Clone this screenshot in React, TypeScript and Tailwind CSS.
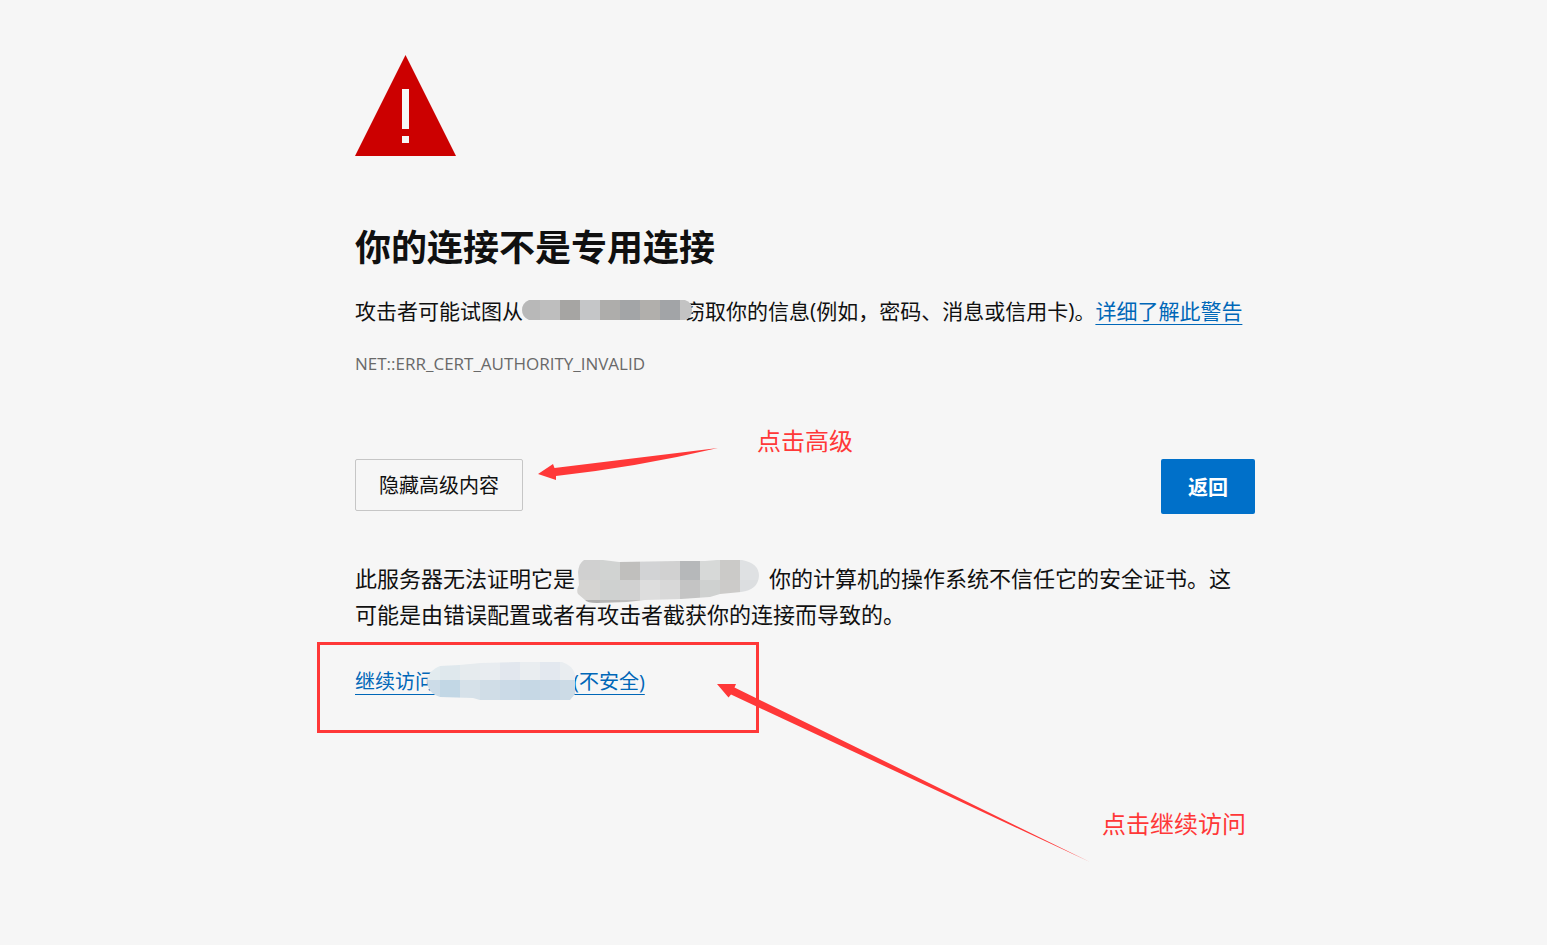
type MosaicProps = {
  id: string;
  width: number;
  height: number;
  shape: string;
  columns: number[];
  rows: { y: number; height: number; colors: string[] }[];
  className: string;
};

const Mosaic = ({ id, width, height, shape, columns, rows, className }: MosaicProps) => {
  return (
    <svg
      aria-hidden="true"
      width={width}
      height={height}
      viewBox={`0 0 ${width} ${height}`}
      shapeRendering="crispEdges"
      className={`relative inline-block align-baseline ${className}`}
    >
      <clipPath id={id}>
        <path d={shape} />
      </clipPath>
      <g clipPath={`url(#${id})`}>
        {rows.map((row) =>
          row.colors.map((color, i) => (
            <rect
              key={`${row.y}-${i}`}
              x={columns[i]}
              y={row.y}
              width={(columns[i + 1] ?? width) - columns[i]}
              height={row.height}
              fill={color}
            />
          ))
        )}
      </g>
    </svg>
  );
};

const WarningIcon = () => {
  return (
    <svg aria-hidden="true" width="102" height="102" viewBox="0 0 102 102" className="block">
      <path d="M50.5 0L101 101H0z" fill="#cc0000" />
      <path d="M47 34h7v40h-7zM47 81h7v7h-7z" fill="#f6f6f6" />
    </svg>
  );
};

// Hand-drawn notes that lie over the page
const Annotations = () => {
  return (
    <div className="absolute inset-0 text-2xl text-[#ff3838] pointer-events-none">
      <svg aria-hidden="true" width="900" height="880" viewBox="0 0 900 880" fill="#ff3838" className="overflow-visible">
        <rect x="-36.5" y="643.5" width="439" height="88" fill="none" stroke="#ff3838" strokeWidth="3" />
        <path d="M183 474L198 464L199.500 468L363 448Q282 467 201 476L201 480z" />
        <path d="M362 684L381 684L379.500 687.500L735 862L376 694.500L373.500 697.500z" />
      </svg>
      <p className="absolute left-[402px] top-[425px] leading-8 whitespace-nowrap">点击高级</p>
      <p className="absolute left-[747px] top-[808px] leading-8 whitespace-nowrap">点击继续访问</p>
    </div>
  );
};

const App = () => {
  return (
    <div
      lang="zh-CN"
      className="min-h-screen bg-[#f6f6f6] pl-[63px] text-[#101010] font-['Open_Sans','Noto_Sans_CJK_SC',sans-serif]"
    >
      <main className="relative flex flex-col max-w-[900px] min-h-screen mx-auto pt-[55px]">
        <WarningIcon />
        <h1 className="mt-[67px] text-4xl leading-12 font-bold">你的连接不是专用连接</h1>
        <div className="flex flex-col mt-[23px] gap-[25px]">
          <p className="text-[21px] leading-8">
            攻击者可能试图从
            <Mosaic
              id="host-summary"
              width={170}
              height={20}
              shape="M7 0H163Q170 2 170 10T163 20H7Q0 17 0 10T7 0z"
              columns={[0, 18, 38, 58, 78, 98, 118, 138, 158]}
              rows={[
                {
                  y: 0,
                  height: 20,
                  colors: ["#b8b8b8", "#bebebe", "#a6a5a3", "#c5c6c8", "#aeadab", "#a3a5a7", "#b1afac", "#a2a4a7", "#c3c3c3"],
                },
              ]}
              className="-mb-px -ml-px -mr-2"
            />
            窃取你的信息(例如，密码、消息或信用卡)。
            <a href="#" className="text-[#0067b8] underline decoration-1 underline-offset-5">
              详细了解此警告
            </a>
          </p>
          <p className="text-[17px] leading-6 text-[#696969]">NET::ERR_CERT_AUTHORITY_INVALID</p>
        </div>

        <div className="flex items-start justify-between mt-[83px] text-xl">
          <button type="button" className="h-[52px] px-[23px] pt-0.5 border border-[#c6c6c6] rounded-xs">
            隐藏高级内容
          </button>
          <button type="button" className="h-[55px] px-[27px] pt-0.5 font-bold text-white bg-[#0070c9] rounded-xs">
            返回
          </button>
        </div>

        <div className="flex flex-col items-start mt-[46px] pr-3 gap-9">
          <p className="text-[22px] leading-9">
            此服务器无法证明它是
            <Mosaic
              id="host-details"
              width={182}
              height={43}
              shape="M7 0H26L42 2L101 1L128 1L140 0H165Q182 3 182 16Q181 30 164 32L143 34L133 37L104 39L68 40L50 42L20 43Q10 43 8 40L1 34Q-1 30 2 25L1 12Q2 3 7 0z"
              columns={[0, 23, 43, 63, 83, 103, 123, 143, 163]}
              rows={[
                {
                  y: 0,
                  height: 20,
                  colors: ["#d0d0d0", "#d1d3d2", "#c0bfbd", "#d2d3d5", "#d1d1d1", "#b6b8ba", "#d7d9d8", "#cbcac8", "#dfe1e3"],
                },
                {
                  y: 20,
                  height: 20,
                  colors: ["#d5d4d2", "#cfd1d0", "#d1d1d1", "#dddddd", "#d8d8d8", "#c4c4c4", "#cfd1d0", "#cccbc9", "#dcdee0"],
                },
                { y: 40, height: 3, colors: ["#aeaeae", "#b6b6b6", "#bcbcbc", "#cccccc"] },
              ]}
              className="-mt-2 -mb-4 ml-0.5 mr-2.5"
            />
            你的计算机的操作系统不信任它的安全证书。这可能是由错误配置或者有攻击者截获你的连接而导致的。
          </p>
          <a href="#" className="text-xl leading-7 text-[#0067b8] underline decoration-1 underline-offset-5">
            继续访问
            <Mosaic
              id="host-proceed"
              width={148}
              height={38}
              shape="M13 4L32 3L54 1L90 0H135Q145 3 148 12V32L143 38H53L46 36L13 35Q0 31 0 18Q2 8 13 4z"
              columns={[0, 13, 33, 53, 73, 93, 113, 133]}
              rows={[
                {
                  y: 0,
                  height: 18,
                  colors: ["#e2ebef", "#dfe8ed", "#e6ebee", "#e8ecf0", "#e2e7ee", "#e9edf0", "#e3e8ef", "#e9edf0"],
                },
                {
                  y: 18,
                  height: 20,
                  colors: ["#ccdce8", "#c2d7e5", "#d6e1e9", "#d0dde7", "#cbdae7", "#c6d8e5", "#c9d9e6", "#ccdbe6"],
                },
              ]}
              className="-mt-2 -mb-[11px] -ml-2 -mr-0.5"
            />
            (不安全)
          </a>
        </div>
        <Annotations />
      </main>
    </div>
  );
};

export default App;
